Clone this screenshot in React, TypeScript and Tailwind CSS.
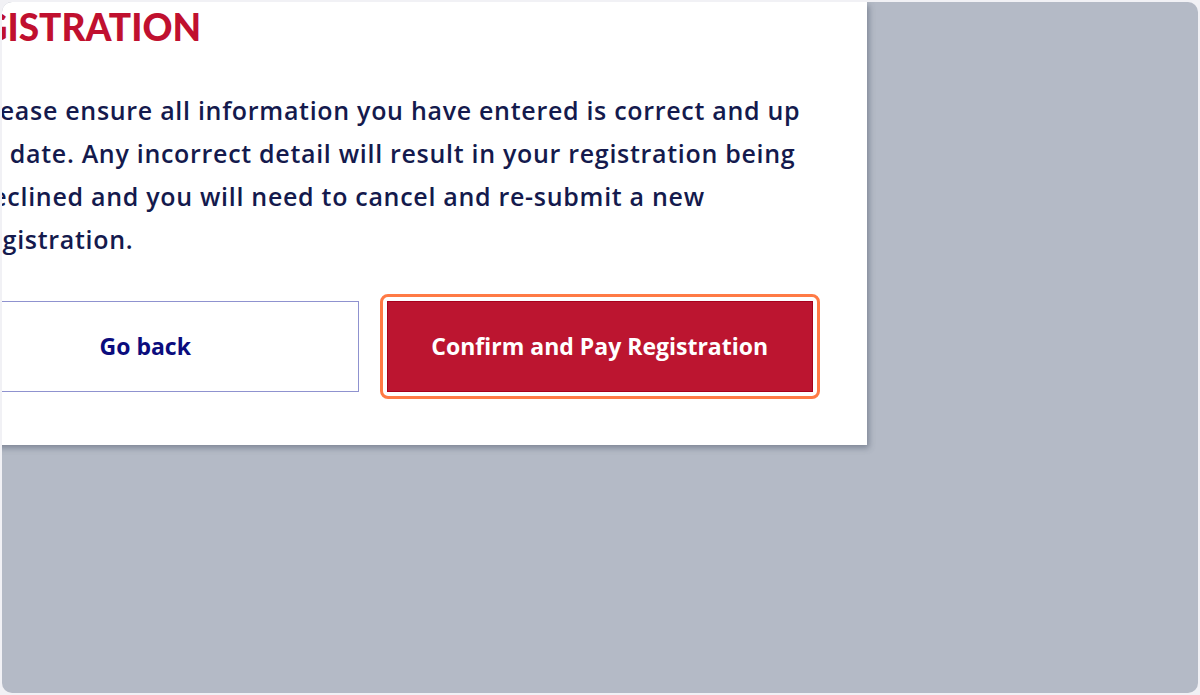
import React from 'react';

export default function App() {
  return (
    <div className="w-[1200px] h-[695px] bg-[#f1f1f5] p-[2px] font-['Open_Sans',sans-serif]">
      <div className="h-full rounded-[10px] bg-[#b4bac6] overflow-hidden">
        <div className="w-[989px] ml-[-124px] bg-white shadow-[2px_3px_6px_rgba(60,70,90,0.45)] pl-[54px] pr-[54px] pb-[53px]">
          {/* Title + message */}
          <div className="pl-[44px]">
            <h1 className="ml-[-40px] pt-[3px] font-['Lato',sans-serif] text-[37px] leading-[44px] font-black text-[#c0102f]">
              REGISTRATION
            </h1>
            <p className="mt-[40px] text-[25px] leading-[43px] font-semibold tracking-[0.7px] text-[#141a4d]">
              Please ensure all information you have entered is correct and up
              <br />
              to date. Any incorrect detail will result in your registration being
              <br />
              declined and you will need to cancel and re-submit a new
              <br />
              registration.
            </p>
          </div>

          {/* Actions */}
          <div className="mt-[40px] grid grid-cols-2 gap-[28px]">
            <button className="h-[91px] border border-[#8f92cf] bg-white text-[23px] font-bold text-[#0b0c7d]">
              Go back
            </button>
            <div className="relative">
              <button className="w-full h-[91px] border border-[#a8001c] bg-[#bc1530] text-[23px] font-bold text-white">
                Confirm and Pay Registration
              </button>
              <div className="absolute inset-[-7px] rounded-[8px] border-[3px] border-[#ff7a45] pointer-events-none" />
            </div>
          </div>
        </div>
      </div>
    </div>
  );
}
